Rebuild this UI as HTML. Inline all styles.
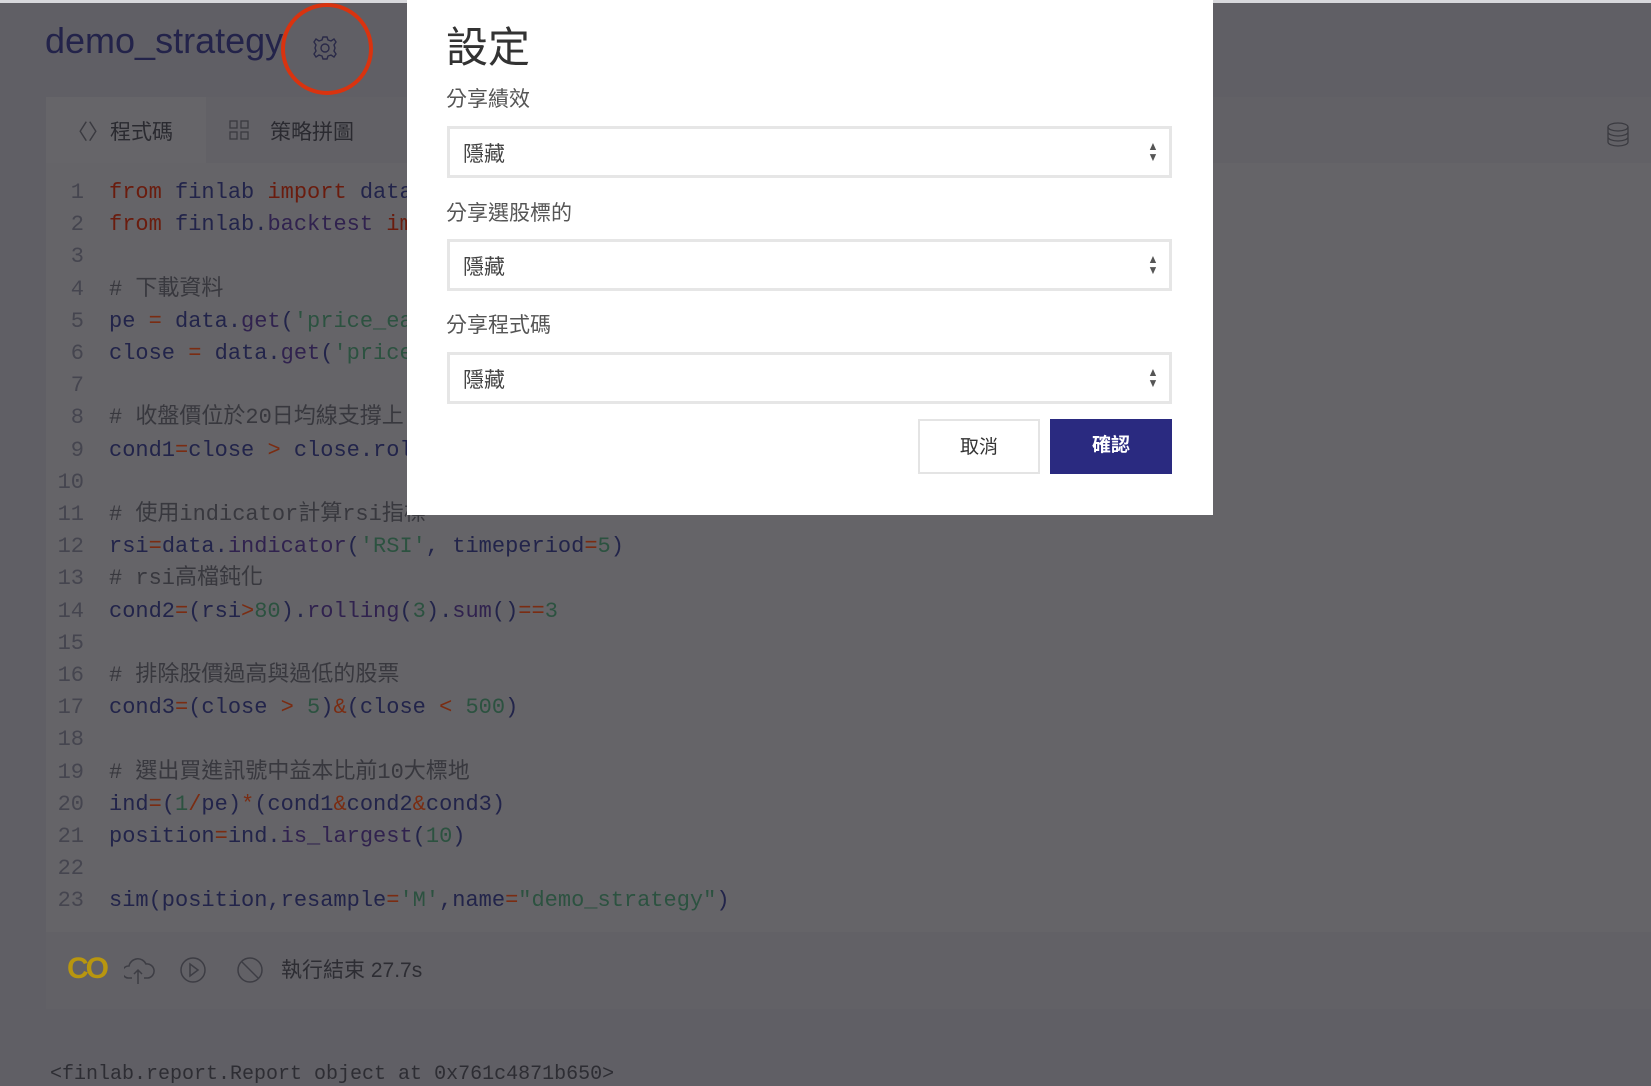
<!DOCTYPE html>
<html><head><meta charset="utf-8"><style>
*{margin:0;padding:0;box-sizing:border-box}
body{width:1651px;height:1070px;overflow:hidden;background:#605f65;font-family:"Liberation Sans","Noto Sans CJK TC",sans-serif;position:relative}
.abs{position:absolute}
.top{left:0;top:0;width:1651px;height:3px;background:#d8d8dc}
.title{left:45px;top:20px;font-size:36px;color:#23234a;}
.panel{left:46px;top:97px;width:1605px;height:912px;background:#656468}
.tabbar{left:46px;top:97px;width:1605px;height:66px;background:#626166}
.tabact{left:46px;top:97px;width:160px;height:66px;background:#666569}
.tab{font-size:21px;color:#2a2a30;top:116px}
.code{left:0;top:177px;font-family:"Liberation Mono","Noto Sans CJK TC",monospace;font-size:22px;line-height:32.2px;white-space:pre;color:#22244a}
.ln{display:inline-block;width:84px;text-align:right;color:#45454f;margin-right:25px}
.k{color:#6a1c0e}.s{color:#2c5240}.o{color:#7a2c12}.c{color:#38383e}.f{color:#30224e}
.foot{left:46px;top:932px;width:1605px;height:77px;background:#626166}
.modal{left:407px;top:0;width:806px;height:515px;background:#fff}
.lbl{font-size:21px;color:#555;left:446px}
.sel{left:447px;width:725px;height:52px;border:3px solid #e6e6e6;font-size:21px;color:#444;padding:9px 0 0 13px}
.arr{position:absolute;right:10px;top:12px;font-size:12px;line-height:11px;color:#555;transform:scaleX(0.9)}
.btn{top:419px;width:122px;height:55px;font-size:19px;text-align:center;line-height:53px}
</style></head><body>
<div class="abs top"></div>
<div class="abs title">demo_strategy</div>
<svg class="abs" style="left:270px;top:0" width="120" height="100">
<g transform="translate(55,48)" fill="none" stroke="#2a2a48" stroke-width="1.4">
<circle r="4"/>
<path d="M-2,-11 L2,-11 L3,-8 L6,-7 L9,-9 L11,-6 L9,-3 L10,0 L9,3 L11,6 L9,9 L6,7 L3,8 L2,11 L-2,11 L-3,8 L-6,7 L-9,9 L-11,6 L-9,3 L-10,0 L-9,-3 L-11,-6 L-9,-9 L-6,-7 L-3,-8 Z"/>
</g>
<circle cx="57" cy="49" r="44" fill="none" stroke="#d9330f" stroke-width="4"/>
</svg>
<div class="abs panel"></div>
<div class="abs tabbar"></div>
<div class="abs tabact"></div>
<div class="abs tab" style="left:67px;color:#3a3a40">〈〉</div>
<div class="abs tab" style="left:110px">程式碼</div>
<svg class="abs" style="left:229px;top:120px" width="22" height="22"><g fill="none" stroke="#3a3a40" stroke-width="1.3"><rect x="1" y="1" width="7" height="7"/><rect x="12" y="1" width="7" height="7"/><rect x="1" y="12" width="7" height="7"/><rect x="12" y="12" width="7" height="7"/></g></svg>
<div class="abs tab" style="left:270px">策略拼圖</div>
<svg class="abs" style="left:1605px;top:122px" width="26" height="26"><g fill="none" stroke="#3a3a40" stroke-width="1.3"><ellipse cx="13" cy="5" rx="10" ry="4"/><path d="M3,5 V20 A10,4 0 0 0 23,20 V5 M3,10 A10,4 0 0 0 23,10 M3,15 A10,4 0 0 0 23,15"/></g></svg>
<div class="abs code"><span class="ln">1</span><span class="k">from</span> finlab <span class="k">import</span> data
<span class="ln">2</span><span class="k">from</span> finlab.<span class="f">backtest</span> <span class="k">import</span> sim
<span class="ln">3</span>
<span class="ln">4</span><span class="c"># 下載資料</span>
<span class="ln">5</span>pe <span class="o">=</span> data.<span class="f">get</span>(<span class="s">'price_earning_ratio'</span>)
<span class="ln">6</span>close <span class="o">=</span> data.<span class="f">get</span>(<span class="s">'price'</span>)
<span class="ln">7</span>
<span class="ln">8</span><span class="c"># 收盤價位於20日均線支撐上</span>
<span class="ln">9</span>cond1<span class="o">=</span>close <span class="o">&gt;</span> close.rolling(20)
<span class="ln">10</span>
<span class="ln">11</span><span class="c"># 使用indicator計算rsi指標</span>
<span class="ln">12</span>rsi<span class="o">=</span>data.<span class="f">indicator</span>(<span class="s">'RSI'</span>, timeperiod<span class="o">=</span><span class="s">5</span>)
<span class="ln">13</span><span class="c"># rsi高檔鈍化</span>
<span class="ln">14</span>cond2<span class="o">=</span>(rsi<span class="o">&gt;</span><span class="s">80</span>).<span class="f">rolling</span>(<span class="s">3</span>).<span class="f">sum</span>()<span class="o">==</span><span class="s">3</span>
<span class="ln">15</span>
<span class="ln">16</span><span class="c"># 排除股價過高與過低的股票</span>
<span class="ln">17</span>cond3<span class="o">=</span>(close <span class="o">&gt;</span> <span class="s">5</span>)<span class="o">&amp;</span>(close <span class="o">&lt;</span> <span class="s">500</span>)
<span class="ln">18</span>
<span class="ln">19</span><span class="c"># 選出買進訊號中益本比前10大標地</span>
<span class="ln">20</span>ind<span class="o">=</span>(<span class="s">1</span><span class="o">/</span>pe)<span class="o">*</span>(cond1<span class="o">&amp;</span>cond2<span class="o">&amp;</span>cond3)
<span class="ln">21</span>position<span class="o">=</span>ind.<span class="f">is_largest</span>(<span class="s">10</span>)
<span class="ln">22</span>
<span class="ln">23</span>sim(position,resample<span class="o">=</span><span class="s">'M'</span>,name<span class="o">=</span><span class="s">"demo_strategy"</span>)</div>
<div class="abs foot"></div>
<div class="abs" style="left:67px;top:952px;font-size:30px;font-weight:bold;color:#b8960f;letter-spacing:-3px">CO</div>
<svg class="abs" style="left:124px;top:954px" width="200" height="34" fill="none" stroke="#3d3d44" stroke-width="1.5">
<path d="M8,24 H4 A6,6 0 0 1 5,12 A9,9 0 0 1 22,10 A6,6 0 0 1 24,24 H20 M14,30 V16 M10,20 L14,16 L18,20"/>
<circle cx="69" cy="16" r="12"/><path d="M66,10 L74,16 L66,22 Z"/>
<circle cx="126" cy="16" r="12"/><path d="M118,8 L134,24"/>
</svg>
<div class="abs" style="left:281px;top:954px;font-size:21px;color:#2d2d33">執行結束 27.7s</div>
<div class="abs" style="left:50px;top:1063px;font-family:'Liberation Mono',monospace;font-size:20px;color:#2d2d33">&lt;finlab.report.Report object at 0x761c4871b650&gt;</div>

<div class="abs modal"></div>
<div class="abs" style="left:446px;top:14px;font-size:42px;color:#333">設定</div>
<div class="abs lbl" style="top:83px">分享績效</div>
<div class="abs sel" style="top:126px">隱藏<div class="arr">▲<br>▼</div></div>
<div class="abs lbl" style="top:197px">分享選股標的</div>
<div class="abs sel" style="top:239px">隱藏<div class="arr">▲<br>▼</div></div>
<div class="abs lbl" style="top:309px">分享程式碼</div>
<div class="abs sel" style="top:352px">隱藏<div class="arr">▲<br>▼</div></div>
<div class="abs btn" style="left:918px;border:2px solid #e4e4e4;color:#333;background:#fff">取消</div>
<div class="abs btn" style="left:1050px;background:#2a2a80;color:#fff;font-weight:bold">確認</div>
</body></html>
